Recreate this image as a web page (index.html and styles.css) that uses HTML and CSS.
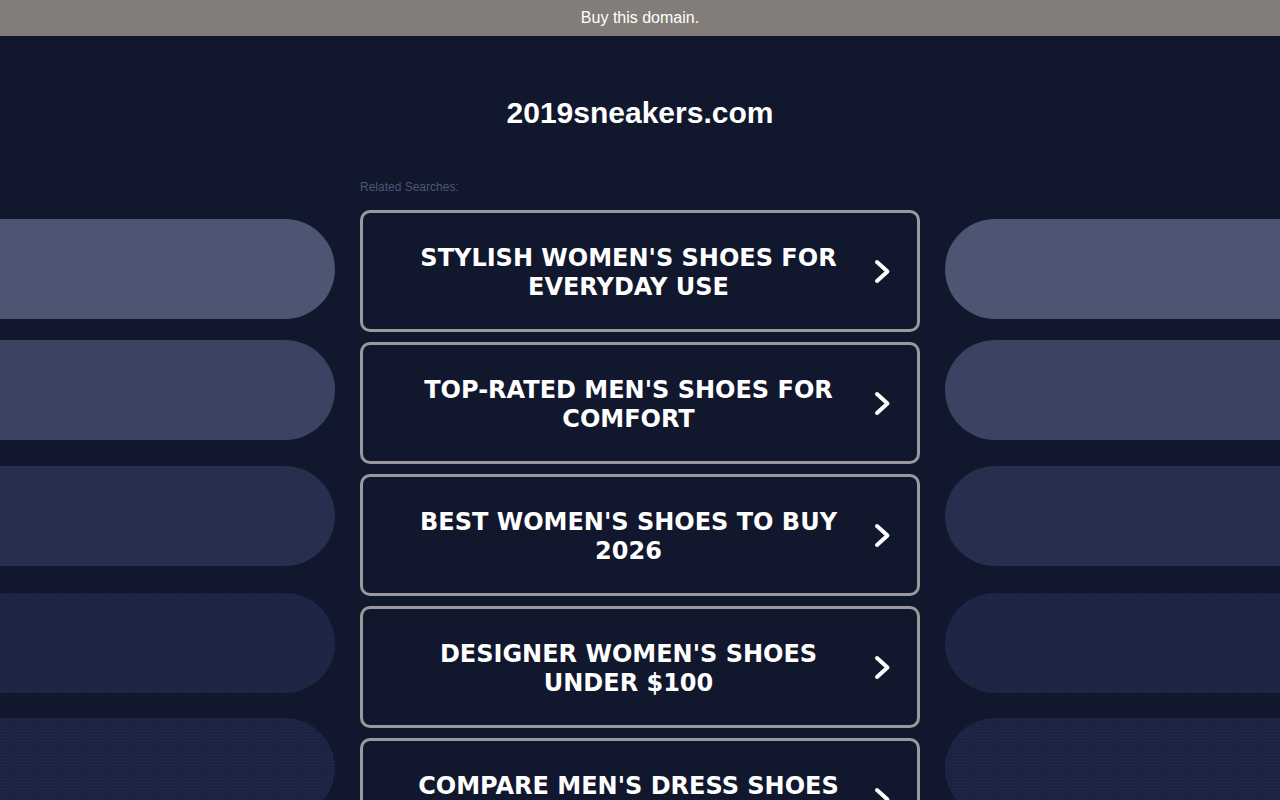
FILE: index.html
```html
<!DOCTYPE html>
<html lang="en">
  <head>
    <meta charset="UTF-8" />
    <meta name="viewport" content="width=device-width, initial-scale=1.0" />
    <title>2019sneakers.com</title>
    <link rel="stylesheet" href="styles.css">
  </head>
  <body>
    <div class="topbar"><a href="#">Buy this domain.</a></div>
    <h1 class="domain">2019sneakers.com</h1>
    <div class="layout">
      <div class="pills pills-left">
        <div class="pill p1"></div>
        <div class="pill p2"></div>
        <div class="pill p3"></div>
        <div class="pill p4"></div>
        <div class="pill p5"></div>
      </div>
      <div class="main">
        <p class="related">Related Searches:</p>
        <a class="link-btn" href="#">
          <span class="link-text">STYLISH WOMEN'S SHOES FOR EVERYDAY USE</span>
          <svg class="chev" viewBox="0 0 17 25"><path d="M3 3 L13.5 12.5 L3 22" /></svg>
        </a>
        <a class="link-btn" href="#">
          <span class="link-text">TOP-RATED MEN'S SHOES FOR COMFORT</span>
          <svg class="chev" viewBox="0 0 17 25"><path d="M3 3 L13.5 12.5 L3 22" /></svg>
        </a>
        <a class="link-btn" href="#">
          <span class="link-text">BEST WOMEN'S SHOES TO BUY 2026</span>
          <svg class="chev" viewBox="0 0 17 25"><path d="M3 3 L13.5 12.5 L3 22" /></svg>
        </a>
        <a class="link-btn" href="#">
          <span class="link-text">DESIGNER WOMEN'S SHOES UNDER $100</span>
          <svg class="chev" viewBox="0 0 17 25"><path d="M3 3 L13.5 12.5 L3 22" /></svg>
        </a>
        <a class="link-btn" href="#">
          <span class="link-text">COMPARE MEN'S DRESS SHOES PRICES</span>
          <svg class="chev" viewBox="0 0 17 25"><path d="M3 3 L13.5 12.5 L3 22" /></svg>
        </a>
      </div>
      <div class="pills pills-right">
        <div class="pill p1"></div>
        <div class="pill p2"></div>
        <div class="pill p3"></div>
        <div class="pill p4"></div>
        <div class="pill p5"></div>
      </div>
    </div>
  </body>
</html>
```

FILE: styles.css
```css
*, *:before, *:after {
  box-sizing: border-box;
}
body {
  margin: 0;
  background-color: #11172d;
  font-family: "Liberation Sans", Arial, sans-serif;
  color: #fff;
}
.topbar {
  height: 36px;
  background-color: #827d79;
  text-align: center;
  line-height: 35px;
  font-size: 16px;
}
.topbar a {
  color: #fff;
  text-decoration: none;
}
.domain {
  margin: 0;
  padding: 58px 0 0 0;
  height: 134px;
  text-align: center;
  font-size: 30px;
  font-weight: bold;
  line-height: 38px;
}
.layout {
  display: grid;
  grid-template-columns: 1fr 560px 1fr;
  column-gap: 25px;
}
.pills {
  display: flex;
  flex-direction: column;
  gap: 25px;
  padding-top: 49px;
}
.pill {
  height: 100px;
}
.pills-left .pill {
  border-radius: 0 50px 50px 0;
}
.pills-right .pill {
  border-radius: 50px 0 0 50px;
}
.pills .p2 {
  margin-top: -4px;
}
.pills .p3 {
  margin-top: 1px;
}
.pills .p4 {
  margin-top: 2px;
}
.p1 { background-color: #4c5672; }
.p2 { background-color: #3a4362; }
.p3 { background-color: #262f4d; }
.p4 {
  background-color: #1c2544;
  background-image: radial-gradient(rgba(255, 255, 255, .03) 0.6px, transparent 0.8px);
  background-size: 3px 3px;
}
.p5 {
  background-color: #1a2342;
  background-image: radial-gradient(rgba(255, 255, 255, .05) 0.6px, transparent 0.8px);
  background-size: 3px 3px;
}
.related {
  margin: 0;
  height: 40px;
  padding-top: 10px;
  font-size: 12px;
  color: #4b5677;
}
.link-btn {
  display: flex;
  align-items: center;
  height: 122px;
  margin-bottom: 10px;
  padding: 3px 26px 0 38px;
  border: 3px solid #9a9a9a;
  border-radius: 10px;
  color: #fff;
  text-decoration: none;
}
.link-text {
  flex: 1;
  margin-right: 18px;
  text-align: center;
  font-family: "DejaVu Sans", Verdana, sans-serif;
  font-weight: bold;
  font-size: 24px;
  line-height: 29px;
}
.chev {
  width: 17px;
  height: 25px;
  flex: none;
  margin-top: -3px;
}
.chev path {
  fill: none;
  stroke: #fff;
  stroke-width: 4;
  stroke-linecap: round;
  stroke-linejoin: round;
}
```
